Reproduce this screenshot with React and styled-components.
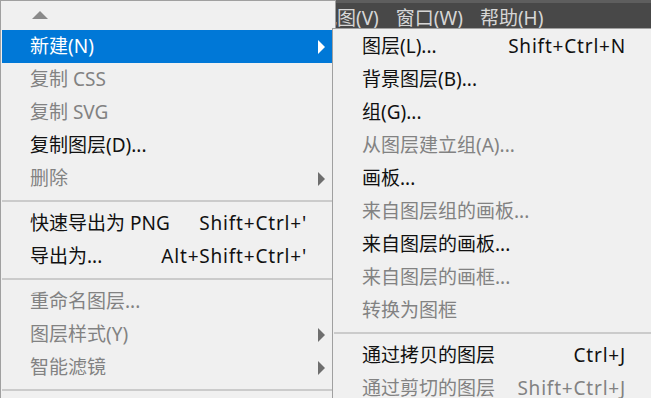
import React from "react";
import styled, { createGlobalStyle } from "styled-components";

const GlobalStyle = createGlobalStyle`
  html, body {
    margin: 0;
    padding: 0;
    overflow: hidden;
  }
  body {
    font-family: "Noto Sans", "Noto Sans CJK SC", sans-serif;
    background: #f0f0f0;
  }
`;

const mainItems = [
  { label: "新建(N)", active: true, sub: true },
  { label: "复制 CSS", disabled: true },
  { label: "复制 SVG", disabled: true },
  { label: "复制图层(D)..." },
  { label: "删除", disabled: true, sub: true },
  { sep: true },
  { label: "快速导出为 PNG", shortcut: "Shift+Ctrl+'" },
  { label: "导出为...", shortcut: "Alt+Shift+Ctrl+'" },
  { sep: true },
  { label: "重命名图层...", disabled: true },
  { label: "图层样式(Y)", disabled: true, sub: true },
  { label: "智能滤镜", disabled: true, sub: true },
  { sep: true },
];

const subItems = [
  { label: "图层(L)...", shortcut: "Shift+Ctrl+N" },
  { label: "背景图层(B)..." },
  { label: "组(G)..." },
  { label: "从图层建立组(A)...", disabled: true },
  { label: "画板..." },
  { label: "来自图层组的画板...", disabled: true },
  { label: "来自图层的画板..." },
  { label: "来自图层的画框...", disabled: true },
  { label: "转换为图框", disabled: true },
  { sep: true },
  { label: "通过拷贝的图层", shortcut: "Ctrl+J" },
  { label: "通过剪切的图层", shortcut: "Shift+Ctrl+J", disabled: true },
];

const App = () => {
  const renderItems = (items, slot) =>
    items.map((item, i) =>
      item.sep ? (
        <Separator key={i} />
      ) : (
        <Row key={i} $active={item.active} $disabled={item.disabled}>
          <Label>{item.label}</Label>
          {item.shortcut && <Shortcut>{item.shortcut}</Shortcut>}
          <ArrowSlot $width={slot}>
            {item.sub && <SubArrow $active={item.active} />}
          </ArrowSlot>
        </Row>
      )
    );

  return (
    <>
      <GlobalStyle />
      <Screen>
        <MenuBar>
          <BarItem>视图(V)</BarItem>
          <BarItem>窗口(W)</BarItem>
          <BarItem>帮助(H)</BarItem>
        </MenuBar>

        <ContextMenu>
          <ScrollUp>
            <UpArrow />
          </ScrollUp>
          {renderItems(mainItems, 27)}
        </ContextMenu>

        <SubMenu>{renderItems(subItems, 26)}</SubMenu>
      </Screen>
    </>
  );
};

const Screen = styled.div`
  position: relative;
  width: 651px;
  height: 398px;
  overflow: hidden;
  background: #f0f0f0;
`;

const MenuBar = styled.div`
  display: flex;
  align-items: center;
  gap: 17px;
  height: 28px;
  padding: 0 0 0 318px;
  border-top: 3px solid #5e5e5e;
  background: #484848;
  box-sizing: border-box;
`;

const BarItem = styled.span`
  color: #d6d6d6;
  font-size: 19px;
  line-height: 22px;
  padding-top: 4px;
`;

const ContextMenu = styled.div`
  position: absolute;
  left: 0;
  top: 0;
  width: 336px;
  padding: 0 1px;
  border: 1px solid #a0a0a0;
  border-bottom: none;
  background: #f0f0f0;
  box-sizing: border-box;
  height: 420px;
`;

const SubMenu = styled.div`
  position: absolute;
  left: 332px;
  top: 28px;
  width: 322px;
  padding: 1px;
  border: 1px solid #a0a0a0;
  border-bottom: none;
  background: #f0f0f0;
  box-sizing: border-box;
  height: 400px;
`;

const ScrollUp = styled.div`
  height: 29px;
  display: flex;
  align-items: center;
  padding-left: 30px;
`;

const UpArrow = styled.div`
  width: 0;
  height: 0;
  border-left: 8px solid transparent;
  border-right: 8px solid transparent;
  border-bottom: 8px solid #8a8a8a;
  margin-top: -2px;
`;

const Row = styled.div`
  display: flex;
  align-items: center;
  height: 33px;
  padding-left: 28px;
  font-size: 19px;
  line-height: 33px;
  white-space: nowrap;
  background: ${(p) => (p.$active ? "#0078d7" : "transparent")};
  color: ${(p) => (p.$active ? "#ffffff" : p.$disabled ? "#828282" : "#111111")};
`;

const Label = styled.span`
  flex: 1;
`;

const Shortcut = styled.span`
  letter-spacing: 0.8px;
`;

const ArrowSlot = styled.span`
  width: ${(p) => p.$width}px;
  flex: none;
  display: flex;
  align-items: center;
  padding-left: 11px;
  box-sizing: border-box;
`;

const SubArrow = styled.span`
  width: 0;
  height: 0;
  border-top: 7px solid transparent;
  border-bottom: 7px solid transparent;
  border-left: 7px solid ${(p) => (p.$active ? "#ffffff" : "#6e6e6e")};
`;

const Separator = styled.div`
  height: 12px;
  display: flex;
  align-items: center;
  &::before {
    content: "";
    flex: 1;
    height: 2px;
    background: #cbcbcb;
  }
`;

export default App;
